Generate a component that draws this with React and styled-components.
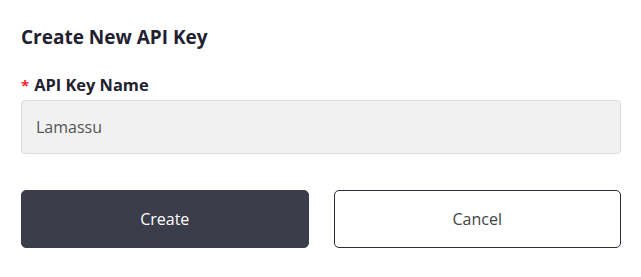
import React from "react";
import styled, { createGlobalStyle } from "styled-components";

const Global = createGlobalStyle`
  html, body { margin: 0; padding: 0; background: #fff; }
  body { font-family: "Open Sans", "Noto Sans", sans-serif; }
`;

const Panel = styled.div`
  width: 641px;
  box-sizing: border-box;
  padding: 25px 20px 0 21px;
  display: flex;
  flex-direction: column;
`;

const Title = styled.h2`
  margin: 0;
  font-size: 19px;
  font-weight: 700;
  line-height: 24px;
  color: #1f2130;
`;

const Label = styled.label`
  margin-top: 25px;
  display: flex;
  align-items: center;
  gap: 5px;
  font-size: 16.4px;
  font-weight: 700;
  line-height: 22px;
  color: #1f2130;
`;

const Star = styled.span`
  color: #f5222d;
  font-size: 15px;
  font-weight: 700;
`;

const Input = styled.input`
  margin-top: 4px;
  box-sizing: border-box;
  height: 54px;
  width: 100%;
  padding: 0 14px;
  border: 1px solid #dcdcdc;
  border-radius: 4px;
  background: #f1f1f1;
  font-family: inherit;
  font-size: 16px;
  color: #555;
  outline: none;
`;

const Actions = styled.div`
  margin-top: 36px;
  display: grid;
  grid-template-columns: 1fr 1fr;
  gap: 25px;
`;

const Button = styled.button`
  box-sizing: border-box;
  height: 58px;
  border-radius: 5px;
  font-family: inherit;
  font-size: 16px;
  cursor: pointer;
  background: ${p => (p.$primary ? "#3b3d4a" : "#fff")};
  color: ${p => (p.$primary ? "#fff" : "#444")};
  border: 1px solid ${p => (p.$primary ? "#3b3d4a" : "#2a2c38")};
`;

export default function App() {
  return (
    <>
      <Global />
      <Panel>
        <Title>Create New API Key</Title>
        <Label>
          <Star>*</Star>
          API Key Name
        </Label>
        <Input defaultValue="Lamassu" />
        <Actions>
          <Button $primary>Create</Button>
          <Button>Cancel</Button>
        </Actions>
      </Panel>
    </>
  );
}
